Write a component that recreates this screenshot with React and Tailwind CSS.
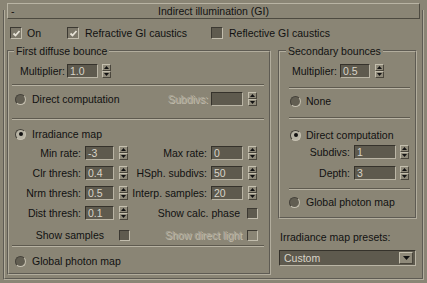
import React from 'react';

// Small 3ds Max style controls
const Spinner = ({ className = '' }) => (
    <div className={`flex flex-col w-[9px] h-[14px] shrink-0 ${className}`}>
        <div className="h-[7px] flex items-center justify-center bg-[#8f8a7a] border border-t-[#c4bfae] border-l-[#c4bfae] border-b-[#4a463c] border-r-[#4a463c]">
            <svg width="5" height="3" viewBox="0 0 5 3"><path d="M2.5 0L5 3H0z" fill="#111" /></svg>
        </div>
        <div className="h-[7px] flex items-center justify-center bg-[#8f8a7a] border border-t-[#c4bfae] border-l-[#c4bfae] border-b-[#4a463c] border-r-[#4a463c]">
            <svg width="5" height="3" viewBox="0 0 5 3"><path d="M0 0H5L2.5 3z" fill="#111" /></svg>
        </div>
    </div>
);

const Input = ({ value, className = '' }) => (
    <div className={`h-[14px] shrink-0 bg-[#5e5a4e] border border-t-[#35322b] border-l-[#35322b] border-b-[#bab5a5] border-r-[#bab5a5] text-[#d8d4c8] pl-[2px] leading-[12px] ${className}`}>
        {value}
    </div>
);

const Check = ({ on, disabled, className = '' }) => (
    <div className={`w-[11px] h-[11px] shrink-0 border border-t-[#3c3932] border-l-[#3c3932] border-b-[#c2bdad] border-r-[#c2bdad] flex items-center justify-center ${on ? 'bg-[#7c7769]' : disabled ? 'bg-[#8a8575]' : 'bg-[#5f5b4f]'} ${className}`}>
        {on && (
            <svg width="9" height="9" viewBox="0 0 9 9">
                <path d="M1.5 4.5L3.5 6.5L7.5 2" stroke="#e6e2d6" strokeWidth="1.8" fill="none" />
            </svg>
        )}
    </div>
);

const Radio = ({ on, className = '' }) => (
    <div className={`w-[11px] h-[11px] shrink-0 rounded-full border border-t-[#45423a] border-l-[#45423a] border-b-[#c6c1b1] border-r-[#c6c1b1] flex items-center justify-center ${on ? 'bg-[#b7b3a4]' : 'bg-[#625e52]'} ${className}`}>
        {on && <div className="w-[4px] h-[4px] rounded-full bg-[#111]" />}
    </div>
);

const Sep = ({ className = '' }) => (
    <div className={`border-t border-b border-t-[#5e5a4f] border-b-[#b8b3a3] ${className}`} />
);

// label + input + spinner pair inside the irradiance map block
const FieldPair = ({ l1, v1, l2, v2, className = '' }) => (
    <div className={`h-[14px] flex items-center ${className}`}>
        <span className="w-[69px] text-right whitespace-nowrap">{l1}</span>
        <Input value={v1} className="ml-[4px] w-[29px]" />
        <Spinner className="ml-[5px]" />
        <span className="w-[79px] text-right whitespace-nowrap">{l2}</span>
        <Input value={v2} className="ml-[4px] w-[32px]" />
        <Spinner className="ml-[5px]" />
    </div>
);

const disabledText = "text-[#aaa596] [text-shadow:1px_1px_0_#c2bdad]";

export default function App() {
    return (
        <div className="w-[427px] h-[283px] overflow-hidden bg-[#8a8575] text-[10.5px] leading-[12px] text-[#111] font-['Liberation_Sans',Arial,sans-serif] pt-[10px] px-[3px]">
            <div className="h-[270px] border-2 border-t-0 [border-style:groove] border-[#b2ad9d] flex flex-col">
                {/* Rollout title */}
                <div className="-mt-[7px] mx-[2px] h-[16px] relative flex items-center justify-center border border-t-[#b9b4a4] border-l-[#b9b4a4] border-b-[#4d4a40] border-r-[#4d4a40]">
                    <span className="absolute left-[3px]">-</span>
                    <span>Indirect illumination (GI)</span>
                </div>

                {/* Top checkboxes */}
                <div className="mt-[8px] h-[12px] pl-[5px] flex items-center">
                    <div className="w-[57px] flex items-center">
                        <Check on className="w-[12px] h-[12px]" />
                        <span className="ml-[5px]">On</span>
                    </div>
                    <div className="w-[144px] flex items-center">
                        <Check on className="w-[12px] h-[12px]" />
                        <span className="ml-[6px]">Refractive GI caustics</span>
                    </div>
                    <div className="flex items-center">
                        <Check className="w-[12px] h-[12px]" />
                        <span className="ml-[6px]">Reflective GI caustics</span>
                    </div>
                </div>

                <div className="mt-[6px] ml-[2px] flex items-start">
                    {/* First diffuse bounce */}
                    <fieldset className="w-[264px] border-2 [border-style:groove] border-[#b2ad9d] px-[3px] pb-[5px]">
                        <legend className="ml-[2px] px-[2px]">First diffuse bounce</legend>
                        <div className="mt-[7px] h-[14px] flex items-center">
                            <span className="ml-[8px] w-[43px] whitespace-nowrap">Multiplier:</span>
                            <Input value="1.0" className="ml-[4px] w-[31px]" />
                            <Spinner className="ml-[4px]" />
                        </div>
                        <Sep className="mt-[6px] mr-[2px]" />
                        <div className="mt-[6px] h-[14px] flex items-center">
                            <Radio className="ml-[3px]" />
                            <span className="ml-[6px] flex-1">Direct computation</span>
                            <span className={disabledText}>Subdivs:</span>
                            <Input value="" className="ml-[3px] w-[32px]" />
                            <Spinner className="ml-[5px] mr-[9px]" />
                        </div>
                        <Sep className="mt-[12px] mr-[2px]" />
                        <div className="mt-[7px] h-[14px] flex items-center">
                            <Radio on className="ml-[3px]" />
                            <span className="ml-[6px]">Irradiance map</span>
                        </div>
                        <FieldPair className="mt-[5px]" l1="Min rate:" v1="-3" l2="Max rate:" v2="0" />
                        <FieldPair className="mt-[6px]" l1="Clr thresh:" v1="0.4" l2="HSph. subdivs:" v2="50" />
                        <FieldPair className="mt-[6px]" l1="Nrm thresh:" v1="0.5" l2="Interp. samples:" v2="20" />
                        <div className="mt-[6px] h-[14px] flex items-center">
                            <span className="w-[69px] text-right whitespace-nowrap">Dist thresh:</span>
                            <Input value="0.1" className="ml-[4px] w-[29px]" />
                            <Spinner className="ml-[5px]" />
                            <span className="w-[112px] text-right whitespace-nowrap">Show calc. phase</span>
                            <Check className="ml-[7px]" />
                        </div>
                        <div className="mt-[8px] h-[14px] flex items-center">
                            <span className="w-[92px] text-right whitespace-nowrap">Show samples</span>
                            <Check className="ml-[15px]" />
                            <span className={`w-[112px] text-right whitespace-nowrap ${disabledText}`}>Show direct light</span>
                            <Check disabled className="ml-[5px]" />
                        </div>
                        <Sep className="mt-[3px] mr-[2px]" />
                        <div className="mt-[7px] h-[14px] flex items-center">
                            <Radio className="ml-[3px]" />
                            <span className="ml-[6px]">Global photon map</span>
                        </div>
                    </fieldset>

                    {/* Secondary bounces + presets */}
                    <div className="ml-[7px] w-[139px] flex flex-col">
                        <fieldset className="border-2 [border-style:groove] border-[#b2ad9d] px-[4px] pb-[8px]">
                            <legend className="ml-[2px] px-[2px]">Secondary bounces</legend>
                            <div className="mt-[7px] h-[14px] flex items-center">
                                <span className="ml-[8px] w-[44px] whitespace-nowrap">Multiplier:</span>
                                <Input value="0.5" className="ml-[4px] w-[30px]" />
                                <Spinner className="ml-[5px]" />
                            </div>
                            <Sep className="mt-[9px] ml-[5px] mr-[1px]" />
                            <div className="mt-[5px] h-[14px] flex items-center">
                                <Radio className="ml-[6px]" />
                                <span className="ml-[5px]">None</span>
                            </div>
                            <Sep className="mt-[9px] ml-[5px] mr-[1px]" />
                            <div className="mt-[9px] h-[14px] flex items-center">
                                <Radio on className="ml-[6px]" />
                                <span className="ml-[5px] whitespace-nowrap">Direct computation</span>
                            </div>
                            <div className="mt-[3px] h-[14px] flex items-center">
                                <span className="w-[66px] text-right">Subdivs:</span>
                                <Input value="1" className="ml-[4px] w-[42px]" />
                                <Spinner className="ml-[4px]" />
                            </div>
                            <div className="mt-[7px] h-[14px] flex items-center">
                                <span className="w-[66px] text-right">Depth:</span>
                                <Input value="3" className="ml-[4px] w-[42px]" />
                                <Spinner className="ml-[4px]" />
                            </div>
                            <Sep className="mt-[8px] ml-[5px] mr-[1px]" />
                            <div className="mt-[5px] h-[14px] flex items-center">
                                <Radio className="ml-[5px]" />
                                <span className="ml-[6px] whitespace-nowrap">Global photon map</span>
                            </div>
                        </fieldset>
                        <div className="mt-[12px] ml-[2px] h-[12px] whitespace-nowrap">Irradiance map presets:</div>
                        <div className="mt-[7px] ml-[1px] w-[137px] h-[16px] bg-[#5e5a4e] border border-t-[#35322b] border-l-[#35322b] border-b-[#bab5a5] border-r-[#bab5a5] flex items-center">
                            <span className="flex-1 pl-[4px] text-[#d8d4c8]">Custom</span>
                            <div className="w-[14px] h-[12px] mr-[2px] bg-[#8f8a7a] border border-t-[#c4bfae] border-l-[#c4bfae] border-b-[#4a463c] border-r-[#4a463c] flex items-center justify-center">
                                <svg width="7" height="4" viewBox="0 0 7 4"><path d="M0 0H7L3.5 4z" fill="#111" /></svg>
                            </div>
                        </div>
                    </div>
                </div>
            </div>
        </div>
    );
}
